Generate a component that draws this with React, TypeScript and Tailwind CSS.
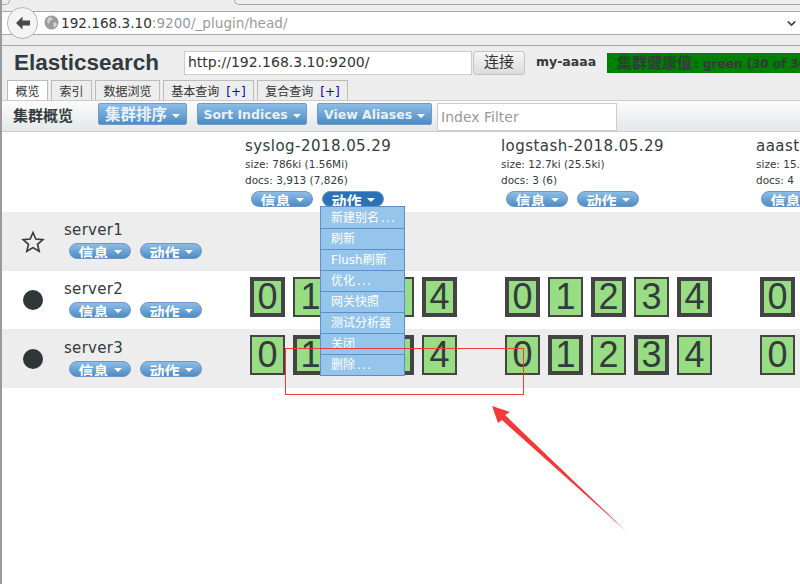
import type { ReactNode } from "react";
import { ChevronDown } from "lucide-react";

const cjk = "font-['DejaVu_Sans','Noto_Sans_CJK_SC',sans-serif]";

function Caret() {
  return <span className="ml-[5px] inline-block h-0 w-0 border-x-[4px] border-t-[4px] border-x-transparent border-t-white" />;
}

function Pill({ label, active }: { label: string; active?: boolean }) {
  return (
    <div
      className={`flex h-[16px] w-[62px] shrink-0 items-start justify-center overflow-hidden rounded-full border border-[#6f94c8] text-[15px] leading-[20px] font-bold text-white ${
        active ? "bg-[#2a72b5]" : "bg-gradient-to-b from-[#8dbde6] to-[#4d8cc4]"
      }`}
    >
      <span className="whitespace-nowrap">{label}</span>
      <span className="mt-[6px] flex"><Caret /></span>
    </div>
  );
}

function ToolButton({ label, width, big }: { label: string; width: string; big?: boolean }) {
  return (
    <div
      className={`flex h-[22px] items-center justify-center rounded-[2px] border border-[#6f9bcf] bg-gradient-to-b from-[#8dbde6] to-[#4d8cc4] pt-[3px] font-bold whitespace-nowrap text-[#e8f1fa] ${width} ${
        big ? "text-[15.5px]" : "text-[12.5px]"
      }`}
    >
      {label}
      <span className="flex"><Caret /></span>
    </div>
  );
}

function Tab({ label, plus, active, width }: { label: string; plus?: boolean; active?: boolean; width: string }) {
  return (
    <div
      className={`flex h-[20px] items-center justify-center border border-b-0 border-[#bbbbbb] pt-[2px] text-[12px] whitespace-nowrap text-[#333333] ${width} ${
        active ? "bg-white" : "bg-[#ededed]"
      }`}
    >
      {label}
      {plus && <span className="ml-[7px] text-[#0000cc]">[+]</span>}
    </div>
  );
}

function Shard({ n, thin }: { n: number; thin?: boolean }) {
  return (
    <div
      className={`flex h-[40px] w-[35px] items-center justify-center border-[#444444] bg-[#98dc84] font-['Liberation_Sans',sans-serif] text-[36px] leading-none text-[#333b3d] ${
        thin ? "border-[2px]" : "border-[4px]"
      }`}
    >
      {n}
    </div>
  );
}

function ShardGroup({ thin, pad }: { thin: boolean[]; pad: string }) {
  return (
    <div className={`flex gap-[8px] ${pad}`}>
      {thin.map((t, i) => (
        <Shard key={i} n={i} thin={t} />
      ))}
    </div>
  );
}

function IndexHead({ name, size, docs, width }: { name: string; size: string; docs: string; width: string }) {
  return (
    <div className={`shrink-0 overflow-hidden ${width}`}>
      <div className="mt-[4px] h-[20px] text-[15px] leading-[20px] tracking-[0.45px] whitespace-nowrap text-[#333b3d]">{name}</div>
      <div className="h-[16px] text-[10.5px] leading-[16px] whitespace-nowrap text-[#333b3d]">{size}</div>
      <div className="h-[16px] text-[10.5px] leading-[16px] whitespace-nowrap text-[#333b3d]">{docs}</div>
    </div>
  );
}

function ServerRow({ name, grey, star, height, top = "mt-[8px]", children }: { name: string; grey?: boolean; star?: boolean; height: string; top?: string; children?: ReactNode }) {
  return (
    <div className={`flex ${height} ${grey ? "bg-[#ededed]" : "bg-white"}`}>
      <div className="flex w-[242px] shrink-0">
        <div className="flex w-[62px] items-center justify-center">
          {star ? (
            <svg width="24" height="24" viewBox="0 0 24 24" fill="none" stroke="#333b3d" strokeWidth="1.6">
              <path d="M12 2.5l2.8 6.6 7.1.6-5.4 4.6 1.7 7-6.2-3.7-6.2 3.7 1.7-7-5.4-4.6 7.1-.6z" />
            </svg>
          ) : (
            <div className="h-[20px] w-[20px] rounded-full bg-[#2f3638]" />
          )}
        </div>
        <div>
          <div className={`${top} h-[20px] text-[15px] leading-[20px] tracking-[0.3px] text-[#333b3d]`}>{name}</div>
          <div className="mt-[3px] ml-[5px] flex gap-[9px]">
            <Pill label="信息" />
            <Pill label="动作" />
          </div>
        </div>
      </div>
      {children}
    </div>
  );
}

const menuItems = ["新建别名", "刷新", "Flush刷新", "优化", "网关快照", "测试分析器", "关闭", "删除"];
const withDots = ["新建别名", "优化", "删除"];

export default function App() {
  return (
    <div className={`relative flex h-[584px] w-[800px] overflow-hidden bg-white ${cjk}`}>
      <div className="w-[2px] shrink-0 bg-[#9a9a9a]" />
      <div className="min-w-0 flex-1">
        {/* browser chrome */}
        <div className="flex h-[46px] flex-col border-b border-[#a8a8a8] bg-[#ededed]">
          <div className="flex h-[5px]">
            <div className="w-[8px] rounded-br-[6px] border-r border-b border-[#a8a8a8]" />
            <div className="w-[224px]" />
            <div className="flex-1 rounded-bl-[6px] border-b border-l border-[#a8a8a8]" />
          </div>
          <div className="flex h-[41px] items-center pb-[4px]">
            <div className="relative flex h-[24px] flex-1 items-center border-y border-[#a8a8a8] bg-white pl-[42px] text-[13.6px] text-[#9a9a9a]">
              <div className="absolute top-[-5px] left-[5px] flex h-[32px] w-[31px] items-center justify-center rounded-full border border-[#b5b5b5] bg-[#f4f4f4]">
                <svg width="16" height="14" viewBox="0 0 16 14" fill="#4a4a4a">
                  <path d="M7.5 0.5L1 7l6.5 6.5V9.5H15v-5H7.5z" />
                </svg>
              </div>
              <svg className="mr-[2px] shrink-0" width="15" height="15" viewBox="0 0 15 15">
                <circle cx="7.5" cy="7.5" r="7" fill="#9b9b9b" />
                <path d="M4 3l3-1 2 2-3 2-1 3-2-2zM9 8l3-1 1 3-3 3z" fill="#d0d0d0" />
              </svg>
              <span className="text-[#333333]">192.168.3.10</span>:9200/_plugin/head/
              <ChevronDown className="absolute top-[5px] right-[2px] text-[#444444]" size={13} strokeWidth={3} />
            </div>
          </div>
        </div>

        {/* app header */}
        <div className="h-[54px] bg-[#ededed]">
          <div className="flex h-[33px] items-center">
            <div className="w-[182px] pl-[12px] font-['Liberation_Sans',sans-serif] text-[22.5px] font-bold text-[#333b3d]">Elasticsearch</div>
            <div className="flex h-[24px] w-[288px] items-center border border-[#cccccc] bg-white pl-[3px] text-[14px] text-[#333333]">http://192.168.3.10:9200/</div>
            <div className="ml-[1px] flex h-[24px] w-[52px] items-center justify-center rounded-[3px] border border-[#c4c4c4] bg-gradient-to-b from-[#f6f6f6] to-[#dcdcdc] text-[15px] text-[#333333]">连接</div>
            <div className="ml-[11px] w-[71px] text-[12.5px] font-bold text-[#333b3d]">my-aaaa</div>
            <div className="h-[20px] flex-1 overflow-hidden bg-[#008000] pl-[10px] leading-[20px] font-bold whitespace-nowrap text-[#333b3d]">
              <span className="text-[15px]">集群健康值</span>
              <span className="ml-[2px] text-[12px]">: green (30 of 30)</span>
            </div>
          </div>
          <div className="mt-[1px] flex gap-[3px] pl-[5px]">
            <Tab label="概览" active width="w-[41px]" />
            <Tab label="索引" width="w-[41px]" />
            <Tab label="数据浏览" width="w-[65px]" />
            <Tab label="基本查询" plus width="w-[91px]" />
            <Tab label="复合查询" plus width="w-[91px]" />
          </div>
        </div>

        {/* toolbar */}
        <div className="flex h-[32px] items-start border-y border-[#cccccc] bg-gradient-to-b from-[#fbfbfb] to-[#e4e8ea] pt-[2px]">
          <div className="w-[96px] pt-[2px] pl-[11px] text-[15px] font-bold text-[#333b3d]">集群概览</div>
          <ToolButton label="集群排序" width="w-[89px]" big />
          <div className="w-[10px]" />
          <ToolButton label="Sort Indices" width="w-[110px]" />
          <div className="w-[10px]" />
          <ToolButton label="View Aliases" width="w-[115px]" />
          <div className="ml-[5px] flex h-[28px] w-[180px] items-center border border-[#cccccc] bg-white pl-[3px] text-[14px] text-[#999999]">Index Filter</div>
        </div>

        {/* cluster table */}
        <div className="flex h-[80px] bg-white">
          <div className="w-[243px] shrink-0" />
          <div className="w-[256px] shrink-0">
            <IndexHead name="syslog-2018.05.29" size="size: 786ki (1.56Mi)" docs="docs: 3,913 (7,826)" width="w-[256px]" />
            <div className="mt-[3px] ml-[6px] flex gap-[9px]">
              <Pill label="信息" />
              <Pill label="动作" active />
            </div>
          </div>
          <div className="w-[255px] shrink-0">
            <IndexHead name="logstash-2018.05.29" size="size: 12.7ki (25.5ki)" docs="docs: 3 (6)" width="w-[255px]" />
            <div className="mt-[3px] ml-[5px] flex gap-[9px]">
              <Pill label="信息" />
              <Pill label="动作" />
            </div>
          </div>
          <div className="min-w-0 flex-1 overflow-hidden">
            <IndexHead name="aaastat" size="size: 15.4ki" docs="docs: 4" width="w-full" />
            <div className="mt-[3px] ml-[5px] flex gap-[9px]">
              <Pill label="信息" />
            </div>
          </div>
        </div>

        <ServerRow name="server1" grey star height="h-[59px]" />
        <ServerRow name="server2" height="h-[58px]">
          <div className="flex items-start pt-[6px]">
            <div className="w-[256px] shrink-0"><ShardGroup pad="pl-[6px]" thin={[false, true, false, true, false]} /></div>
            <div className="w-[255px] shrink-0"><ShardGroup pad="pl-[5px]" thin={[false, true, false, true, false]} /></div>
            <ShardGroup pad="pl-[5px]" thin={[false]} />
          </div>
        </ServerRow>
        <ServerRow name="server3" grey top="mt-[9px]" height="h-[59px]">
          <div className="flex items-start pt-[6px]">
            <div className="w-[256px] shrink-0"><ShardGroup pad="pl-[6px]" thin={[true, false, true, false, true]} /></div>
            <div className="w-[255px] shrink-0"><ShardGroup pad="pl-[5px]" thin={[true, false, true, false, true]} /></div>
            <ShardGroup pad="pl-[5px]" thin={[true]} />
          </div>
        </ServerRow>
      </div>

      {/* open dropdown */}
      <div className="absolute top-[206px] left-[320px] w-[85px] border border-[#5f8ccb] bg-[#96c5ec]">
        {menuItems.map((item, i) => (
          <div key={item} className={`flex h-[21px] items-center pl-[10px] text-[12px] whitespace-nowrap text-white ${i > 0 ? "border-t border-[#5f8ccb]" : ""}`}>
            {item}
            {withDots.includes(item) && <span className="ml-[2px] tracking-[1.2px]">...</span>}
          </div>
        ))}
      </div>

      {/* red annotation */}
      <div className="pointer-events-none absolute top-[348px] left-[285px] h-[47px] w-[239px] border border-[#f23a3a]" />
      <svg className="pointer-events-none absolute top-[400px] left-[488px]" width="145" height="140" viewBox="0 0 145 140">
        <path d="M4 6L22 12 17 15 139 132 14 20 10 23z" fill="#f53838" />
      </svg>
    </div>
  );
}
